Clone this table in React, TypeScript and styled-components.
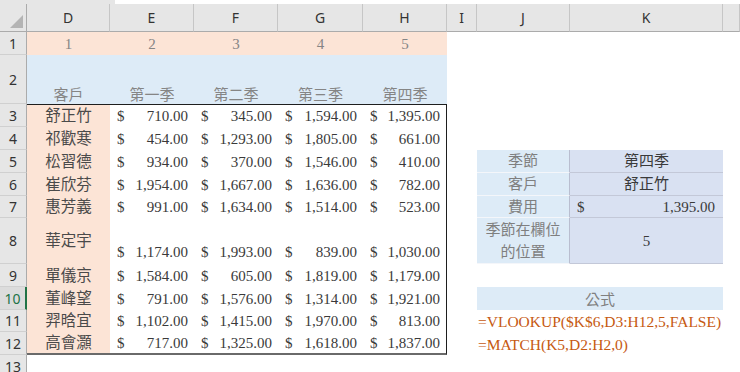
import React from "react";
import styled, { createGlobalStyle, css } from "styled-components";

const GlobalStyle = createGlobalStyle`
  html, body { margin: 0; padding: 0; background: #ffffff; overflow: hidden; }
  #root { width: 740px; height: 372px; overflow: hidden; }
`;

const SERIF = `"Liberation Serif", "Noto Sans CJK TC", serif`;
const SANS = `"Noto Sans", "Liberation Sans", "Noto Sans CJK TC", sans-serif`;
const CJK_SANS = `"Noto Sans CJK TC", "Noto Sans", sans-serif`;

const Page = styled.div`
  display: flex;
  flex-direction: column;
  width: 740px;
  height: 372px;
  overflow: hidden;
`;

const TopStrip = styled.div`
  display: flex;
  height: 4px;
  flex: none;
`;

const TopStripGrey = styled.div`
  width: 115px;
  background: #e6e6e6;
`;

const Sheet = styled.div`
  display: grid;
  grid-template-columns: 27px 83px 84px 84px 85px 84px 30px 93px 153px 1fr;
  grid-template-rows: 28px 23px 49px 23px 23px 23px 23px 22px 46px 23px 23px 22px 23px 23px;
  flex: none;
`;

const Corner = styled.div`
  grid-column: 1;
  grid-row: 1;
  background: #e6e6e6;
  border-right: 1px solid #ababab;
  border-bottom: 1px solid #ababab;
  box-sizing: border-box;
  display: flex;
  align-items: flex-end;
  justify-content: flex-end;
  padding: 0 3px 3px 0;
`;

const ColHead = styled.div<{ $col: number }>`
  grid-column: ${(p) => p.$col};
  grid-row: 1;
  background: #e6e6e6;
  border-right: 1px solid #c6c6c6;
  border-bottom: 1px solid #ababab;
  box-sizing: border-box;
  display: flex;
  align-items: center;
  justify-content: center;
  font-family: ${SANS};
  font-size: 14px;
  color: #333333;
`;

const RowHead = styled.div<{ $row: number; $active?: boolean }>`
  grid-column: 1;
  grid-row: ${(p) => p.$row + 1};
  background: ${(p) => (p.$active ? "#dcdcdc" : "#e6e6e6")};
  border-right: ${(p) => (p.$active ? "2px solid #217346" : "1px solid #ababab")};
  border-bottom: 1px solid #d0d0d0;
  box-sizing: border-box;
  display: flex;
  align-items: ${(p) => (p.$row === 13 ? "flex-start" : "center")};
  padding-top: ${(p) => (p.$row === 13 ? "2px" : "0")};
  justify-content: center;
  font-family: ${SANS};
  font-size: 14px;
  color: ${(p) => (p.$active ? "#217346" : "#333333")};
  overflow: hidden;
`;

type CellProps = {
  $col: number;
  $row: number;
  $span?: number;
  $bg?: string;
  $color?: string;
  $justify?: "center" | "flex-start" | "flex-end" | "space-between";
  $valign?: "center" | "flex-end";
  $top?: boolean;
  $right?: boolean;
  $bottom?: boolean;
};

const Cell = styled.div<CellProps>`
  grid-column: ${(p) => p.$col} / span ${(p) => p.$span ?? 1};
  grid-row: ${(p) => p.$row + 1};
  background: ${(p) => p.$bg ?? "transparent"};
  color: ${(p) => p.$color ?? "#3a3a3a"};
  box-sizing: border-box;
  display: flex;
  align-items: ${(p) => p.$valign ?? "center"};
  justify-content: ${(p) => p.$justify ?? "center"};
  font-family: ${SERIF};
  font-size: 15px;
  line-height: 20px;
  white-space: nowrap;
  min-width: 0;
  ${(p) => p.$top && css`border-top: 1px solid #1e1e1e;`}
  ${(p) => p.$right && css`border-right: 1px solid #1e1e1e;`}
  ${(p) => p.$bottom && css`border-bottom: 2px solid #6a6a6a;`}
`;

const NameCell = styled(Cell)`
  color: #4a4a4a;
  font-size: 15.5px;
`;

const Money = styled(Cell)`
  padding: 0 6px 0 7px;
`;

const HeadLabel = styled(Cell)`
  color: #858585;
  line-height: 18px;
`;

const LookupLabel = styled(Cell)`
  color: #7f7f7f;
  background: #ddebf7;
  border-bottom: 1px solid #f4f6fa;
  border-right: 1px solid #b9bed0;
  white-space: normal;
  text-align: center;
  line-height: 22px;
  padding: 0 2px;
`;

const LookupValue = styled(Cell)`
  background: #d9e1f2;
  border-bottom: 1px solid #c3c8d8;
  color: #3a3a3a;
`;

const FormulaTitle = styled(Cell)`
  background: #ddebf7;
  color: #808080;
  font-family: ${CJK_SANS};
  font-size: 15px;
`;

const Formula = styled(Cell)`
  color: #c65911;
  font-size: 15.5px;
  padding-left: 1px;
  overflow: visible;
`;

const cols = ["D", "E", "F", "G", "H", "I", "J", "K", ""];
const quarters = ["第一季", "第二季", "第三季", "第四季"];

const data: { name: string; v: number[] }[] = [
  { name: "舒正竹", v: [710, 345, 1594, 1395] },
  { name: "祁歡寒", v: [454, 1293, 1805, 661] },
  { name: "松習德", v: [934, 370, 1546, 410] },
  { name: "崔欣芬", v: [1954, 1667, 1636, 782] },
  { name: "惠芳義", v: [991, 1634, 1514, 523] },
  { name: "華定宇", v: [1174, 1993, 839, 1030] },
  { name: "單儀京", v: [1584, 605, 1819, 1179] },
  { name: "董峰望", v: [791, 1576, 1314, 1921] },
  { name: "羿晗宜", v: [1102, 1415, 1970, 813] },
  { name: "高會灝", v: [717, 1325, 1618, 1837] },
];

const fmt = (n: number) =>
  n.toLocaleString("en-US", { minimumFractionDigits: 2, maximumFractionDigits: 2 });

const PEACH = "#fce4d6";
const BLUE = "#ddebf7";

export default function App() {
  const rows = [];
  for (let r = 1; r <= 13; r++) rows.push(r);

  return (
    <Page>
      <GlobalStyle />
      <TopStrip>
        <TopStripGrey />
      </TopStrip>
      <Sheet>
        <Corner>
          <svg width="13" height="13" viewBox="0 0 13 13">
            <polygon points="13,0 13,13 0,13" fill="#b4b4b4" />
          </svg>
        </Corner>
        {cols.map((c, i) => (
          <ColHead key={"c" + i} $col={i + 2}>
            {c}
          </ColHead>
        ))}
        {rows.map((r) => (
          <RowHead key={r} $row={r} $active={r === 10}>
            {r}
          </RowHead>
        ))}

        {[1, 2, 3, 4, 5].map((n, i) => (
          <HeadLabel key={"n" + n} $col={i + 2} $row={1} $bg={PEACH}>
            {n}
          </HeadLabel>
        ))}

        <HeadLabel $col={2} $row={2} $bg={BLUE} $valign="flex-end">
          客戶
        </HeadLabel>
        {quarters.map((q, i) => (
          <HeadLabel key={q} $col={i + 3} $row={2} $bg={BLUE} $valign="flex-end">
            {q}
          </HeadLabel>
        ))}

        {data.map((d, i) => {
          const row = i + 3;
          const first = row === 3;
          const last = row === 12;
          const tall = row === 8;
          return (
            <React.Fragment key={d.name}>
              <NameCell $col={2} $row={row} $bg={PEACH} $top={first} $bottom={last}>
                {d.name}
              </NameCell>
              {d.v.map((v, j) => (
                <Money
                  key={j}
                  $col={j + 3}
                  $row={row}
                  $bg="#ffffff"
                  $justify="space-between"
                  $valign={tall ? "flex-end" : "center"}
                  $top={first}
                  $bottom={last}
                  $right={j === 3}
                  style={tall ? { paddingBottom: 2 } : undefined}
                >
                  <span>$</span>
                  <span>{fmt(v)}</span>
                </Money>
              ))}
            </React.Fragment>
          );
        })}

        <LookupLabel $col={8} $row={5}>季節</LookupLabel>
        <LookupValue $col={9} $row={5}>第四季</LookupValue>
        <LookupLabel $col={8} $row={6}>客戶</LookupLabel>
        <LookupValue $col={9} $row={6}>舒正竹</LookupValue>
        <LookupLabel $col={8} $row={7}>費用</LookupLabel>
        <LookupValue $col={9} $row={7} $justify="space-between" style={{ padding: "0 8px 0 7px" }}>
          <span>$</span>
          <span>1,395.00</span>
        </LookupValue>
        <LookupLabel $col={8} $row={8}>季節在欄位的位置</LookupLabel>
        <LookupValue $col={9} $row={8}>5</LookupValue>

        <FormulaTitle $col={8} $row={10} $span={2}>公式</FormulaTitle>
        <Formula $col={8} $row={11} $span={3} $justify="flex-start" $valign="flex-end">
          =VLOOKUP($K$6,D3:H12,5,FALSE)
        </Formula>
        <Formula $col={8} $row={12} $span={3} $justify="flex-start" $valign="flex-end">
          =MATCH(K5,D2:H2,0)
        </Formula>
      </Sheet>
    </Page>
  );
}
